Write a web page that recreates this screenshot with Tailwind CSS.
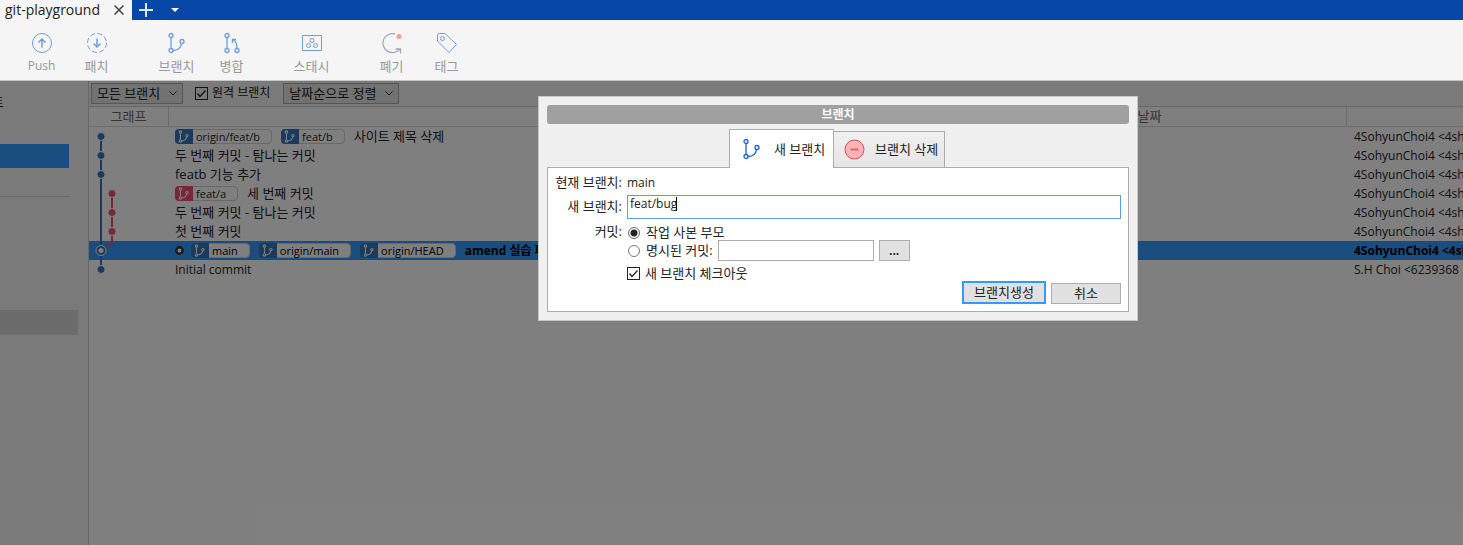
<!DOCTYPE html>
<html lang="ko">
<head>
    <meta charset="UTF-8">
    <meta name="viewport" content="width=device-width, initial-scale=1.0">
    <title>git-playground</title>
    <script src="https://cdn.jsdelivr.net/npm/@tailwindcss/browser@4"></script>
</head>
<body class="relative flex h-screen flex-col overflow-hidden bg-white font-['Open_Sans','Noto_Sans_CJK_KR',sans-serif] text-[13px] leading-[19px] text-[#222]">
    <!-- Shared icons -->
    <svg class="hidden">
        <symbol id="branch" viewBox="0 0 20 22" fill="none" stroke="currentColor">
            <path d="M4 6v10M6 18.500c5 0 8-3 8.500-7.500" />
            <circle cx="4" cy="3.500" r="2" />
            <circle cx="4" cy="18.500" r="2" />
            <circle cx="15" cy="9.500" r="2" />
        </symbol>
        <symbol id="chevron" viewBox="0 0 8 5" fill="none" stroke="currentColor">
            <path d="M.5.5 4 4 7.500.5" />
        </symbol>
        <symbol id="tick" viewBox="0 0 13 13" fill="none" stroke="currentColor">
            <path d="M2.500 6.500 5 9.500 10.500 3.500" stroke-width="1.300" />
        </symbol>
    </svg>

    <!-- Title bar -->
    <header class="flex h-5 shrink-0 bg-[#0647a8]">
        <div class="flex w-[132px] items-center justify-between bg-[#f5f5f5] pr-2 pl-[5px]">
            <span class="text-sm leading-5">git-playground</span>
            <button aria-label="탭 닫기">
                <svg class="size-[10px] text-[#444]" viewBox="0 0 10 10" stroke="currentColor" stroke-width="1.500"><path d="M.5.5l9 9M9.500.5l-9 9" /></svg>
            </button>
        </div>
        <button class="ml-[7px]" aria-label="새 탭">
            <svg class="size-[14px]" viewBox="0 0 14 14" stroke="#dfe8f5" stroke-width="2"><path d="M7 0v14M0 7h14" /></svg>
        </button>
        <button class="ml-[18px]" aria-label="탭 목록">
            <svg class="h-1 w-2" viewBox="0 0 8 4" fill="#fff"><path d="M0 0h8L4 4z" /></svg>
        </button>
    </header>

    <!-- Toolbar -->
    <nav class="flex h-[61px] shrink-0 gap-[25px] border-b border-[#c6c9c6] bg-[#f5f5f5] pt-3 pl-[14px] text-[#999]">
        <div class="flex">
            <button class="flex w-[55px] flex-col items-center gap-[2px] text-xs leading-5">
                <svg class="size-[22px]" viewBox="0 0 22 22" fill="none" stroke="#6e9ce0"><circle cx="11" cy="11" r="9.500" /><path d="M11 15.500V7M7.500 10.500 11 7l3.500 3.500" stroke-width="1.500" /></svg>
                Push
            </button>
            <button class="flex w-[55px] flex-col items-center gap-[2px] leading-5">
                <svg class="size-[22px]" viewBox="0 0 22 22" fill="none" stroke="#6e9ce0"><circle cx="11" cy="11" r="9.500" stroke-dasharray="5 2.460" /><path d="M11 6.500V15M7.500 11.500 11 15l3.500-3.500" stroke-width="1.500" /></svg>
                패치
            </button>
        </div>
        <div class="flex">
            <button class="flex w-[55px] flex-col items-center gap-[2px] leading-5">
                <svg class="h-[22px] w-5 text-[#6e9ce0] [stroke-width:1.3]"><use href="#branch" /></svg>
                브랜치
            </button>
            <button class="flex w-[55px] flex-col items-center gap-[2px] leading-5">
                <svg class="h-[22px] w-5" viewBox="0 0 20 22" fill="none" stroke="#6e9ce0" stroke-width="1.300"><path d="M5 6v10M15 16c0-4-1.500-7-4-8.500M10.500 11V7.500H14" /><circle cx="5" cy="3.500" r="2" /><circle cx="5" cy="18.500" r="2" /><circle cx="15" cy="18.500" r="2" /></svg>
                병합
            </button>
        </div>
        <button class="flex w-[55px] flex-col items-center gap-[2px] leading-5">
            <svg class="size-[22px]" viewBox="0 0 22 22" fill="none" stroke="#6e9ce0"><path d="M1.500 3.500h19v15h-19z" /><circle cx="11" cy="8.500" r="2" /><circle cx="7.500" cy="13.500" r="2" /><circle cx="14.500" cy="13.500" r="2" /></svg>
            스태시
        </button>
        <div class="flex">
            <button class="flex w-[55px] flex-col items-center gap-[2px] leading-5">
                <svg class="size-[22px]" viewBox="0 0 22 22" fill="none" stroke="#a3a9b8" stroke-width="1.300"><path d="M14 2A9.500 9.500 0 1 0 18.500 17.500M14.500 17h5v4.500" /><circle cx="18" cy="4.500" r="2.500" fill="#ff9d8c" stroke="none" /></svg>
                폐기
            </button>
            <button class="flex w-[55px] flex-col items-center gap-[2px] leading-5">
                <svg class="size-[22px]" viewBox="0 0 22 22" fill="none" stroke="#6e9ce0"><path d="M1.500 3.500a2 2 0 0 1 2-2H9l11.500 11-7.500 8L1.500 9z" /><circle cx="6.500" cy="6.500" r="2" /></svg>
                태그
            </button>
        </div>
    </nav>

    <main class="relative flex min-h-0 flex-1">
        <!-- Sidebar -->
        <aside class="w-[89px] shrink-0 border-r border-[#d0d0d0] bg-[#f5f5f5] pt-3">
            <div class="flex h-5 w-1 justify-end overflow-hidden">트</div>
            <div class="mt-[31px] h-6 w-[69px] bg-[#3399ff]"></div>
            <div class="mt-7 h-px w-[70px] bg-[#d0d0d0]"></div>
            <div class="mt-[113px] h-[25px] w-[78px] bg-[#d8d8d8]"></div>
        </aside>

        <section class="min-w-0 flex-1">
            <!-- Filters -->
            <div class="flex h-[26px] items-center border-b border-[#cfcfcf] bg-[#f5f5f5] pb-px pl-[2px]">
                <div class="relative mr-3">
                    <select aria-label="브랜치 필터" class="block h-[21px] w-[92px] appearance-none border border-[#acacac] bg-[#e5e5e5] pl-[5px] leading-[19px]">
                        <option>모든 브랜치</option>
                    </select>
                    <svg class="pointer-events-none absolute top-2 right-[6px] h-[5px] w-2"><use href="#chevron" /></svg>
                </div>
                <label class="mr-[13px] flex items-center gap-1 text-xs">
                    <span class="grid size-[13px]">
                        <input type="checkbox" checked class="col-start-1 row-start-1 size-[13px] appearance-none border border-[#222]">
                        <svg class="pointer-events-none col-start-1 row-start-1 size-[13px]"><use href="#tick" /></svg>
                    </span>
                    원격 브랜치
                </label>
                <div class="relative">
                    <select aria-label="정렬" class="block h-[21px] w-[116px] appearance-none border border-[#acacac] bg-[#e5e5e5] pl-[5px] leading-[19px]">
                        <option>날짜순으로 정렬</option>
                    </select>
                    <svg class="pointer-events-none absolute top-2 right-[6px] h-[5px] w-2"><use href="#chevron" /></svg>
                </div>
            </div>

            <!-- Commit log -->
            <div class="relative">
                <table class="w-full table-fixed border-separate border-spacing-0 whitespace-nowrap">
                    <colgroup>
                        <col class="w-[80px]">
                        <col>
                        <col class="w-[394px]">
                        <col class="w-[116px]">
                    </colgroup>
                    <thead class="text-[#666]">
                        <tr>
                            <th class="h-5 border-r border-b border-[#d8d8d8] p-0 font-normal">그래프</th>
                            <th class="border-r border-b border-[#d8d8d8] p-0 font-normal">설명</th>
                            <th class="border-r border-b border-[#d8d8d8] p-0 font-normal">날짜</th>
                            <th class="border-b border-[#d8d8d8] p-0"></th>
                        </tr>
                    </thead>
                    <tbody>
                        <tr class="h-[19px]">
                            <td class="p-0"></td>
                            <td class="p-0 pl-[6px]">
                                <div class="flex h-[19px] items-center gap-[9px]">
                                    <span class="flex h-[15px] rounded-sm border border-[#d0d0d0] pr-[11px] text-[11px] leading-[13px]"><svg class="mr-[3px] -my-px -ml-px h-[15px] w-[18px] rounded-l-sm bg-[#3677b9] p-px text-white [stroke-width:1.8]"><use href="#branch" /></svg>origin/feat/b</span>
                                    <span class="flex h-[15px] rounded-sm border border-[#d0d0d0] pr-[11px] text-[11px] leading-[13px]"><svg class="mr-[3px] -my-px -ml-px h-[15px] w-[18px] rounded-l-sm bg-[#3677b9] p-px text-white [stroke-width:1.8]"><use href="#branch" /></svg>feat/b</span>
                                    사이트 제목 삭제
                                </div>
                            </td>
                            <td class="p-0"></td>
                            <td class="overflow-hidden p-0 pl-[7px] text-xs leading-[19px]">4SohyunChoi4 &lt;4sh</td>
                        </tr>
                        <tr class="h-[19px]">
                            <td class="p-0"></td>
                            <td class="p-0 pl-[6px]">두 번째 커밋 - 탐나는 커밋</td>
                            <td class="p-0"></td>
                            <td class="overflow-hidden p-0 pl-[7px] text-xs leading-[19px]">4SohyunChoi4 &lt;4sh</td>
                        </tr>
                        <tr class="h-[19px]">
                            <td class="p-0"></td>
                            <td class="p-0 pl-[6px]">featb 기능 추가</td>
                            <td class="p-0"></td>
                            <td class="overflow-hidden p-0 pl-[7px] text-xs leading-[19px]">4SohyunChoi4 &lt;4sh</td>
                        </tr>
                        <tr class="h-[19px]">
                            <td class="p-0"></td>
                            <td class="p-0 pl-[6px]">
                                <div class="flex h-[19px] items-center gap-[9px]">
                                    <span class="flex h-[15px] rounded-sm border border-[#d0d0d0] pr-[11px] text-[11px] leading-[13px]"><svg class="mr-[3px] -my-px -ml-px h-[15px] w-[18px] rounded-l-sm bg-[#ee5070] p-px text-white [stroke-width:1.8]"><use href="#branch" /></svg>feat/a</span>
                                    세 번째 커밋
                                </div>
                            </td>
                            <td class="p-0"></td>
                            <td class="overflow-hidden p-0 pl-[7px] text-xs leading-[19px]">4SohyunChoi4 &lt;4sh</td>
                        </tr>
                        <tr class="h-[19px]">
                            <td class="p-0"></td>
                            <td class="p-0 pl-[6px]">두 번째 커밋 - 탐나는 커밋</td>
                            <td class="p-0"></td>
                            <td class="overflow-hidden p-0 pl-[7px] text-xs leading-[19px]">4SohyunChoi4 &lt;4sh</td>
                        </tr>
                        <tr class="h-[19px]">
                            <td class="p-0"></td>
                            <td class="p-0 pl-[6px]">첫 번째 커밋</td>
                            <td class="p-0"></td>
                            <td class="overflow-hidden p-0 pl-[7px] text-xs leading-[19px]">4SohyunChoi4 &lt;4sh</td>
                        </tr>
                        <tr class="h-[19px] bg-[#3399ff] text-black">
                            <td class="p-0"></td>
                            <td class="p-0 pl-[6px]">
                                <div class="flex h-[19px] items-center gap-[9px]">
                                    <svg class="-mr-[2px] size-[9px]" viewBox="0 0 9 9"><circle cx="4.500" cy="4.500" r="3.200" fill="#fff" stroke="#333" stroke-width="2.400" /></svg>
                                    <span class="flex h-[15px] rounded-sm border border-[#d0d0d0] bg-white pr-[11px] text-[11px] leading-[13px]"><svg class="mr-[3px] -my-px -ml-px h-[15px] w-[18px] rounded-l-sm bg-[#3677b9] p-px text-white [stroke-width:1.8]"><use href="#branch" /></svg>main</span>
                                    <span class="flex h-[15px] rounded-sm border border-[#d0d0d0] bg-white pr-[11px] text-[11px] leading-[13px]"><svg class="mr-[3px] -my-px -ml-px h-[15px] w-[18px] rounded-l-sm bg-[#3677b9] p-px text-white [stroke-width:1.8]"><use href="#branch" /></svg>origin/main</span>
                                    <span class="flex h-[15px] rounded-sm border border-[#d0d0d0] bg-white pr-[11px] text-[11px] leading-[13px]"><svg class="mr-[3px] -my-px -ml-px h-[15px] w-[18px] rounded-l-sm bg-[#3677b9] p-px text-white [stroke-width:1.8]"><use href="#branch" /></svg>origin/HEAD</span>
                                    <b class="text-xs">amend 실습 파일</b>
                                </div>
                            </td>
                            <td class="p-0"></td>
                            <td class="overflow-hidden p-0 pl-[7px] text-xs leading-[19px] font-bold">4SohyunChoi4 &lt;4sh</td>
                        </tr>
                        <tr class="h-[19px]">
                            <td class="p-0"></td>
                            <td class="p-0 pl-[6px] text-xs leading-[19px]">Initial commit</td>
                            <td class="p-0"></td>
                            <td class="overflow-hidden p-0 pl-[7px] text-xs leading-[19px]">S.H Choi &lt;6239368</td>
                        </tr>
                    </tbody>
                </table>

                <!-- Commit graph, laid over the first column -->
                <svg class="absolute top-5 left-0 h-[152px] w-[79px]" viewBox="0 0 79 152" fill="none">
                    <path d="M12 9.500v133" stroke="#3677b9" stroke-width="2" />
                    <path d="M23 66.500v49l-11 8" stroke="#ee5070" stroke-width="2" />
                    <g fill="#3677b9" stroke="#fff">
                        <circle cx="12" cy="9.500" r="4" />
                        <circle cx="12" cy="28.500" r="4" />
                        <circle cx="12" cy="47.500" r="4" />
                        <circle cx="12" cy="142.500" r="4" />
                    </g>
                    <g fill="#ee5070" stroke="#fff">
                        <circle cx="23" cy="66.500" r="4" />
                        <circle cx="23" cy="85.500" r="4" />
                        <circle cx="23" cy="104.500" r="4" />
                    </g>
                    <circle cx="12" cy="123.500" r="5" fill="#3677b9" stroke="#fff" />
                    <circle cx="12" cy="123.500" r="2.500" fill="#fff" />
                </svg>
            </div>
        </section>

        <div class="absolute inset-0 bg-black/50"></div>
    </main>

    <!-- Branch dialog -->
    <div role="dialog" aria-labelledby="dialogTitle" class="absolute top-24 left-[538px] w-[600px] border border-[#c8c8c8] bg-[#f0f0f0] p-2 text-[#222]">
        <h1 id="dialogTitle" class="rounded-[3px] bg-[#a0a0a0] text-center text-xs leading-[19px] font-bold text-white">브랜치</h1>

        <div class="relative mt-[5px] -mb-px flex items-end justify-center pr-[2px]">
            <button class="flex h-[39px] w-[105px] items-center gap-3 border border-b-0 border-[#acacac] bg-white pl-3">
                <svg class="h-[22px] w-5 text-[#1c5fd0] [stroke-width:1.3]"><use href="#branch" /></svg>
                새 브랜치
            </button>
            <button class="mb-px -ml-px flex h-9 w-[112px] items-center gap-[10px] border border-b-0 border-[#acacac] bg-linear-to-b from-[#f0f0f0] to-[#e5e5e5] pl-[10px]">
                <svg class="size-[21px]" viewBox="0 0 21 21"><circle cx="10.500" cy="10.500" r="9.500" fill="#ffb3b8" stroke="#d64c4c" /><path d="M6.500 10.500h8" stroke="#e06666" stroke-width="2" /></svg>
                브랜치 삭제
            </button>
        </div>

        <form class="border border-[#acacac] bg-white px-[7px] pt-[5px] pb-[7px]">
            <div class="grid grid-cols-[67px_1fr] gap-x-[5px]">
                <span class="text-right">현재 브랜치:</span>
                <span class="text-xs leading-[19px]">main</span>

                <label for="newBranch" class="mt-1 pt-px text-right">새 브랜치:</label>
                <div class="relative mt-[3px]">
                    <input id="newBranch" type="text" value="feat/bug" class="block h-6 w-full border border-[#569de5] bg-white px-[2px] pb-2 text-xs outline-none">
                    <span class="absolute top-[2px] left-[49px] h-[14px] w-px bg-black"></span>
                </div>

                <span class="mt-[3px] text-right">커밋:</span>
                <div class="mt-1">
                    <label class="flex items-center gap-[6px] pl-px">
                        <input type="radio" name="commit" checked class="size-3 appearance-none rounded-full border border-[#666] bg-[radial-gradient(circle,#222_3px,transparent_4px)]">
                        작업 사본 부모
                    </label>
                    <div class="-mt-[2px] flex h-[21px] items-center pl-px">
                        <label class="mr-[5px] flex items-center gap-[6px]">
                            <input type="radio" name="commit" class="size-3 appearance-none rounded-full border border-[#777]">
                            명시된 커밋:
                        </label>
                        <input type="text" aria-label="명시된 커밋" class="h-[21px] w-[156px] border border-[#abadb3] bg-white">
                        <button type="button" class="ml-[5px] h-[21px] w-[31px] border border-[#adadad] bg-[#e1e1e1] text-xs leading-[17px] font-bold">...</button>
                    </div>
                    <label class="mt-[3px] flex items-center gap-[5px]">
                        <span class="grid size-[13px]">
                            <input type="checkbox" checked class="col-start-1 row-start-1 size-[13px] appearance-none border border-[#222]">
                            <svg class="pointer-events-none col-start-1 row-start-1 size-[13px]"><use href="#tick" /></svg>
                        </span>
                        새 브랜치 체크아웃
                    </label>
                </div>
            </div>
            <div class="-mt-[2px] flex items-end justify-end gap-[5px]">
                <button type="submit" class="h-[23px] w-[84px] border-2 border-[#3399ff] bg-[#e1e1e1]">브랜치생성</button>
                <button type="button" class="h-[21px] w-[70px] border border-[#adadad] bg-[#e1e1e1]">취소</button>
            </div>
        </form>
    </div>
</body>
</html>
